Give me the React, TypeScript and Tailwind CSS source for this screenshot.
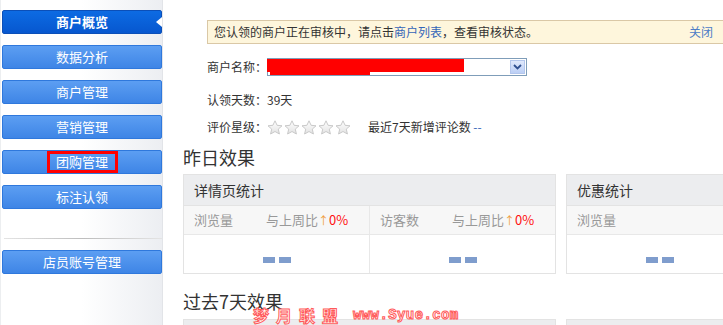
import React from "react";

const cjk = { fontFamily: '"Noto Sans CJK SC", "Noto Sans", sans-serif' };

function NavBtn({ label, active, boxed }: { label: string; active?: boolean; boxed?: boolean }) {
  if (active) {
    return (
      <div className="relative h-[24px] w-[160px] rounded-[2px] border border-[#0b4fb8] bg-gradient-to-b from-[#0d6be3] to-[#0757cf] flex items-center justify-center text-white text-[13px] font-bold">
        {label}
        <div className="absolute right-[-1px] top-[6px] w-0 h-0 border-y-[5px] border-y-transparent border-r-[6px] border-r-white" />
      </div>
    );
  }
  return (
    <div className="h-[24px] w-[160px] rounded-[2px] border border-[#2f78dc] bg-gradient-to-b from-[#5c9ef2] to-[#3e85e6] flex items-center justify-center text-white text-[13px]">
      {boxed ? (
        <span className="box-border border-[3px] border-[#ff0000] h-[22px] w-[71px] whitespace-nowrap flex items-center justify-center">
          {label}
        </span>
      ) : (
        label
      )}
    </div>
  );
}

function Star() {
  return (
    <svg width="16" height="15" viewBox="0 0 16 15">
      <defs>
        <linearGradient id="sg" x1="0" y1="0" x2="0" y2="1">
          <stop offset="0" stopColor="#ffffff" />
          <stop offset="1" stopColor="#e2e2e2" />
        </linearGradient>
      </defs>
      <path
        d="M8 0.8 L10.1 5.3 L15 5.8 L11.3 9.1 L12.4 14 L8 11.5 L3.6 14 L4.7 9.1 L1 5.8 L5.9 5.3 Z"
        fill="url(#sg)"
        stroke="#c9c9c9"
        strokeWidth="1"
      />
    </svg>
  );
}

function Dashes() {
  return (
    <div className="flex gap-[4px]">
      <div className="w-[12px] h-[6px] bg-[#7f9dcd]" />
      <div className="w-[12px] h-[6px] bg-[#7f9dcd]" />
    </div>
  );
}

function Cell({ label, withCompare }: { label: string; withCompare?: boolean }) {
  return (
    <div className="flex-1 flex flex-col">
      <div className="h-[29px] bg-[#f7f7f7] border-b border-[#e8e8e8] flex items-center pl-[10px] text-[13px] text-[#999]">
        <span className="w-[72px]">{label}</span>
        {withCompare && (
          <span className="flex items-center">
            与上周比<span className="text-[#f0a040] text-[11px]">↑</span>
            <span className="text-[#ff1010]">0%</span>
          </span>
        )}
      </div>
      <div className="h-[38px] flex items-center justify-center pt-[12px]">
        <Dashes />
      </div>
    </div>
  );
}

export default function App() {
  return (
    <div className="relative w-[723px] h-[325px] overflow-hidden bg-white flex text-[#333]" style={cjk}>
      {/* Sidebar */}
      <div className="w-[163px] h-full shrink-0 border-l border-[#eceef0] border-r border-r-[#e2e4e8] bg-gradient-to-r from-white via-white to-[#eceef2] pl-[1px] pt-[10px] flex flex-col gap-[11px]">
        <NavBtn label="商户概览" active />
        <NavBtn label="数据分析" />
        <NavBtn label="商户管理" />
        <NavBtn label="营销管理" />
        <NavBtn label="团购管理" boxed />
        <NavBtn label="标注认领" />
        <div className="h-[19px] flex items-end">
          <div className="ml-[2px] h-px w-[158px] bg-gradient-to-r from-[#e4e4e4] via-[#bdbdbd] to-[#e4e4e4]" />
        </div>
        <NavBtn label="店员账号管理" />
      </div>

      {/* Main */}
      <div className="flex-1 pl-[20px] overflow-hidden">
        <div className="ml-[24px] mt-[20px] w-[540px] h-[24px] border border-[#dac8a6] bg-[#fef6dc] flex items-center justify-between pl-[6px] pr-[33px] text-[12px]">
          <span>
            您认领的商户正在审核中，请点击<span className="text-[#3565b8]">商户列表</span>，查看审核状态。
          </span>
          <span className="text-[#4c7cc6]">关闭</span>
        </div>

        <div className="ml-[24px] mt-[14px] h-[18px] flex items-center text-[12px]">
          <span className="w-[60px]">商户名称：</span>
          <div className="relative w-[260px] h-[18px] border border-[#7f9db9] bg-white">
            <div className="absolute left-[-1px] top-0 w-[197px] h-[13px] bg-[#ff0000]" />
            <div className="absolute left-[2px] top-[13px] w-[100px] h-[3px] bg-[#ff0000]" />
            <div className="absolute right-[1px] top-[1px] w-[15px] h-[14px] border border-[#b3c6ec] bg-gradient-to-b from-[#dfe8fb] to-[#bccff5] flex items-center justify-center">
              <svg width="9" height="6" viewBox="0 0 9 6">
                <path d="M1 1 L4.5 4.5 L8 1" fill="none" stroke="#2f4f8f" strokeWidth="1.8" />
              </svg>
            </div>
          </div>
        </div>

        <div className="ml-[24px] mt-[16px] h-[16px] flex items-center text-[12px]">
          认领天数：<span>39天</span>
        </div>

        <div className="ml-[24px] mt-[11px] h-[16px] flex items-center text-[12px]">
          <span className="w-[60px]">评价星级：</span>
          <div className="flex gap-[1px]">
            <Star />
            <Star />
            <Star />
            <Star />
            <Star />
          </div>
          <span className="ml-[17px]">
            最近7天新增评论数 <span className="text-[#3565b8]">--</span>
          </span>
        </div>

        <div className="mt-[11px] h-[22px] flex items-center text-[18px] leading-none">昨日效果</div>

        <div className="mt-[6px] flex gap-[10px]">
          <div className="w-[373px] shrink-0 border border-[#e3e3e3]">
            <div className="h-[31px] bg-[#ecedef] border-b border-[#e3e3e3] flex items-center pl-[10px] text-[14px]">详情页统计</div>
            <div className="flex">
              <div className="flex-1 flex border-r border-[#e8e8e8]">
                <Cell label="浏览量" withCompare />
              </div>
              <div className="flex-1 flex">
                <Cell label="访客数" withCompare />
              </div>
            </div>
          </div>
          <div className="w-[373px] shrink-0 border border-[#e3e3e3]">
            <div className="h-[31px] bg-[#ecedef] border-b border-[#e3e3e3] flex items-center pl-[10px] text-[14px]">优惠统计</div>
            <div className="flex">
              <div className="w-[185px] flex">
                <Cell label="浏览量" />
              </div>
            </div>
          </div>
        </div>

        <div className="mt-[17px] h-[20px] flex items-center text-[18px] leading-none">过去7天效果</div>
        <div className="mt-[8px] flex gap-[10px]">
          <div className="w-[373px] shrink-0 h-[20px] border border-[#e3e3e3] bg-[#ecedef]" />
          <div className="w-[373px] shrink-0 h-[20px] border border-[#e3e3e3] bg-[#ecedef]" />
        </div>
      </div>

      {/* Watermark */}
      <div className="absolute left-[253px] top-[307px] flex items-center text-[16px] font-bold text-white [-webkit-text-stroke:1px_#ff5a5a] leading-none">
        <span className="tracking-[7px]" style={cjk}>梦月联盟</span>
        <span
          className="ml-[8px] text-[14px] tracking-[0.4px]"
          style={{ fontFamily: '"Liberation Mono", monospace' }}
        >
          www.Syue.com
        </span>
      </div>
    </div>
  );
}
